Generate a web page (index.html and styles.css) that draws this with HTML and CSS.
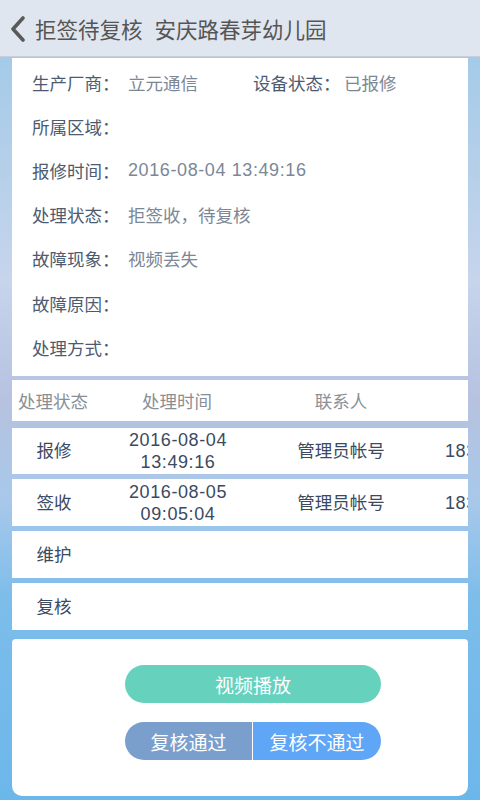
FILE: index.html
```html
<!DOCTYPE html>
<html lang="zh-CN">
<head>
    <meta charset="UTF-8">
    <title>拒签待复核</title>
    <link rel="stylesheet" href="styles.css">
</head>
<body>
<div class="header">
    <svg class="back" width="18" height="26" viewBox="0 0 18 26">
        <path d="M14 2 L4 13 L14 24" fill="none" stroke="#5a5a5a" stroke-width="3.6" stroke-linecap="round" stroke-linejoin="round"/>
    </svg>
    <span class="title">拒签待复核&nbsp;&nbsp;安庆路春芽幼儿园</span>
</div>

<div class="content">
    <div class="card info">
        <div class="info-row">
            <div class="pair"><span class="label">生产厂商：</span><span class="value">立元通信</span></div>
            <div class="pair second"><span class="label">设备状态：</span><span class="value">已报修</span></div>
        </div>
        <div class="info-row"><span class="label">所属区域：</span></div>
        <div class="info-row"><span class="label">报修时间：</span><span class="value num">2016-08-04 13:49:16</span></div>
        <div class="info-row"><span class="label">处理状态：</span><span class="value">拒签收，待复核</span></div>
        <div class="info-row"><span class="label">故障现象：</span><span class="value">视频丢失</span></div>
        <div class="info-row"><span class="label">故障原因：</span></div>
        <div class="info-row"><span class="label">处理方式：</span></div>
    </div>

    <div class="card table-head">
        <span class="col c1">处理状态</span>
        <span class="col c2">处理时间</span>
        <span class="col c3">联系人</span>
    </div>

    <div class="card trow first">
        <span class="col c1">报修</span>
        <span class="col c2 num">2016-08-04<br>13:49:16</span>
        <span class="col c3">管理员帐号</span>
        <span class="col c4 num">18355104567</span>
    </div>
    <div class="card trow">
        <span class="col c1">签收</span>
        <span class="col c2 num">2016-08-05<br>09:05:04</span>
        <span class="col c3">管理员帐号</span>
        <span class="col c4 num">18355104567</span>
    </div>
    <div class="card trow">
        <span class="col c1">维护</span>
    </div>
    <div class="card trow">
        <span class="col c1">复核</span>
    </div>

    <div class="card actions">
        <button type="button" class="btn play">视频播放</button>
        <div class="btn-pair">
            <button type="button" class="btn pass">复核通过</button>
            <button type="button" class="btn reject">复核不通过</button>
        </div>
    </div>
</div>
</body>
</html>
```

FILE: styles.css
```css
html, body {
    margin: 0;
    height: 800px;
    overflow: hidden;
}
body {
    font-family: "Liberation Sans", "Noto Sans CJK SC", sans-serif;
    background: linear-gradient(to bottom, #9cc8e8 0, #b4cfe9 160px, #c6d4ec 280px, #b6c2e0 400px, #a8c8ea 500px, #7cbdea 600px, #6cb7ea 800px);
}
.header {
    height: 56px;
    background: #dfe6ef;
    border-bottom: 1px solid #c6ced9;
    display: flex;
    align-items: center;
    padding-left: 9px;
}
.back {
    margin-right: 8px;
    margin-top: 1px;
}
.title {
    font-size: 21.5px;
    color: #555;
}
.content {
    padding: 1px 12px 0 12px;
}
.card {
    background: #fff;
}
.info {
    height: 318px;
    padding-top: 2px;
    box-sizing: border-box;
    margin-bottom: 4px;
}
.info-row {
    height: 44.2px;
    display: flex;
    align-items: center;
    padding-left: 20px;
    font-size: 17.5px;
}
.pair {
    display: flex;
    width: 221px;
    flex-shrink: 0;
}
.label {
    color: #4d5b70;
    width: 96px;
    flex-shrink: 0;
}
.value {
    color: #7c8796;
}
.num {
    font-size: 18px;
    letter-spacing: 0.6px;
}
.second {
    width: 200px;
}
.second .label {
    width: 91px;
}
.table-head, .trow {
    display: flex;
    align-items: center;
    overflow: hidden;
    font-size: 17.5px;
}
.table-head {
    height: 41px;
    color: #8a8f96;
    margin-bottom: 7px;
}
.trow {
    height: 47px;
    color: #3b4a5f;
    margin-bottom: 5px;
    line-height: 22px;
}
.trow.first {
    height: 46px;
}
.col {
    flex-shrink: 0;
    text-align: center;
}
.c1 {
    width: 82px;
}
.c2 {
    width: 166px;
}
.trow .c1 {
    width: 84px;
}
.trow .c2 {
    width: 164px;
}
.c3 {
    width: 162px;
}
.c4 {
    width: 150px;
    padding-left: 23px;
    text-align: left;
}
.actions {
    margin-top: 9px;
    height: 157px;
    border-radius: 4px 4px 10px 10px;
    display: flex;
    flex-direction: column;
    align-items: center;
    padding: 26px 0 0 26px;
    box-sizing: border-box;
}
.btn {
    border: none;
    height: 38px;
    color: #fff;
    font-family: inherit;
    font-size: 19px;
    padding: 0;
}
.play {
    width: 256px;
    border-radius: 19px;
    background: #66d2be;
    margin-bottom: 19px;
}
.btn-pair {
    display: flex;
    gap: 1px;
}
.pass {
    width: 127px;
    border-radius: 19px 0 0 19px;
    background: #7b9fcd;
}
.reject {
    width: 128px;
    border-radius: 0 19px 19px 0;
    background: #60a6f7;
}
```
